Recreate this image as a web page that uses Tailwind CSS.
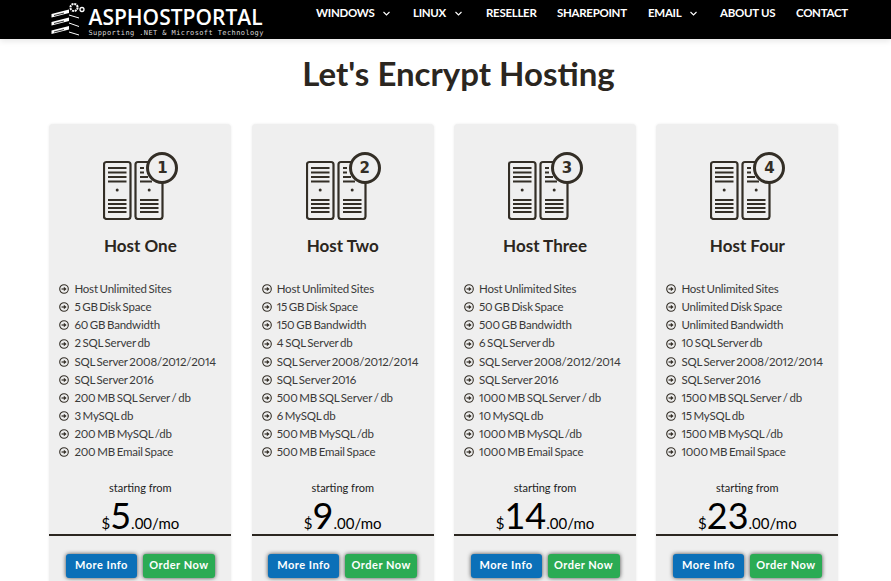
<!DOCTYPE html>
<html lang="en">
  <head>
    <meta charset="UTF-8" />
    <title>Let's Encrypt Hosting | ASPHostPortal</title>
    <script src="https://cdn.jsdelivr.net/npm/@tailwindcss/browser@4"></script>
  </head>
  <body class="bg-white h-[581px] overflow-hidden font-['Lato',sans-serif] text-[#2b2620]">

    <!-- shared icons -->
    <svg class="hidden">
      <symbol id="racks" viewBox="0 0 76 68">
        <g fill="none" stroke="#332e26" stroke-width="2.200">
          <rect x="1" y="10" width="26.500" height="57" rx="2.500" />
          <rect x="32.500" y="10" width="27" height="57" rx="2.500" />
        </g>
        <g stroke="#332e26" stroke-width="1.800">
          <path d="M5 16H23.500M5 20.500H23.500M5 25H23.500M5 29.500H23.500M5 48H23.500M5 52H23.500M5 56H23.500M5 60H23.500" />
          <path d="M37 16H41M37 20.500H41M37 25H45M37 29.500H49M37 48H55.500M37 52H55.500M37 56H55.500M37 60H55.500" />
        </g>
        <circle cx="14.200" cy="38" r="1.500" fill="#332e26" />
        <circle cx="46.200" cy="38" r="1.500" fill="#332e26" />
      </symbol>
      <symbol id="bullet" viewBox="0 0 10 10">
        <circle cx="5" cy="5" r="4.300" fill="none" stroke="#332e26" stroke-width="1.100" />
        <path d="M2.500 5H5" stroke="#332e26" stroke-width="1.200" />
        <path d="M4.800 2.800L7.600 5L4.800 7.200Z" fill="#332e26" />
      </symbol>
    </svg>

    <!-- NAV -->
    <header class="relative z-10 h-[39px] bg-black shadow-[0_2px_6px_rgba(0,0,0,0.1)] flex text-white">
      <a class="ml-[50px] mt-[2px] flex gap-[3px] h-[35px]">
        <svg width="35" height="35" viewBox="0 0 35 35" fill="none" stroke="#fff">
          <path d="M1.500 12L19 7.500V11L1.500 15.500ZM1.500 20L19 15.500V19L1.500 23.500ZM1.500 28.500L19 24V27.500L1.500 32Z" fill="#fff" stroke="none" />
          <path d="M4 13.500L14 11M4 21.500L14 19M4 30L14 27.500" stroke="#000" stroke-width="0.800" />
          <path d="M19 13L29 16M19 21L29 24.500M19 30L29 33" stroke-width="1" />
          <circle cx="24" cy="5.500" r="3.600" stroke-width="2" stroke-dasharray="2 0.800" />
          <circle cx="32" cy="7.500" r="2" stroke-width="1.300" />
        </svg>
      </a>
      <span class="absolute left-[88.500px] top-[5px] flex flex-col">
        <span class="font-['Open_Sans',sans-serif] font-semibold text-[21px] leading-[24px]">ASPHOSTPORTAL</span>
        <span class="font-['DejaVu_Sans_Mono',monospace] text-[7px] leading-[8px] tracking-[0.4px] text-[#d8d8d8]">Supporting .NET &amp; Microsoft Technology</span>
      </span>
      <nav class="absolute left-[316px] top-[6px] flex text-[11.500px] leading-[14px] font-bold tracking-[-0.3px]">
        <a class="w-[97px] flex items-center gap-[9px]">WINDOWS
          <svg width="7" height="5" viewBox="0 0 7 5" fill="none" stroke="#fff" stroke-width="1.100"><path d="M0.500 1L3.500 4L6.500 1" /></svg>
        </a>
        <a class="w-[73px] flex items-center gap-[9px]">LINUX
          <svg width="7" height="5" viewBox="0 0 7 5" fill="none" stroke="#fff" stroke-width="1.100"><path d="M0.500 1L3.500 4L6.500 1" /></svg>
        </a>
        <a class="w-[71px]">RESELLER</a>
        <a class="w-[91px]">SHAREPOINT</a>
        <a class="w-[72px] flex items-center gap-[9px]">EMAIL
          <svg width="7" height="5" viewBox="0 0 7 5" fill="none" stroke="#fff" stroke-width="1.100"><path d="M0.500 1L3.500 4L6.500 1" /></svg>
        </a>
        <a class="w-[76px]">ABOUT US</a>
        <a>CONTACT</a>
      </nav>
    </header>

    <main>
      <h1 class="text-center text-[33px] leading-[40px] font-bold mt-[14px] mb-[31px] pl-[26px] text-[#2b2620]">Let's Encrypt Hosting</h1>

      <section class="ml-[49.400px] w-[789px] grid grid-cols-4 gap-[20.330px]">

        <!-- Host One -->
        <article class="h-[480px] bg-[#efefef] rounded-[4px] shadow-[0_0_3px_rgba(0,0,0,0.08)]">
          <div class="relative ml-[54px] mt-[28px] w-[76px] h-[68px]">
            <svg width="76" height="68"><use href="#racks" /></svg>
            <span class="absolute left-[43px] top-0 w-[32px] h-[32px] rounded-full border-[3px] border-[#332e26] bg-[#efefef] flex items-center justify-center font-['DejaVu_Sans',sans-serif] text-[15px] font-bold text-[#332e26]">1</span>
          </div>
          <h2 class="text-center text-[17px] leading-[20px] font-bold mt-[16px] mb-[24px]">Host One</h2>
          <ul class="pl-[10px] text-[11.500px] leading-[18.150px] tracking-[-0.2px] [word-spacing:-1px] [font-variant-numeric:proportional-nums] text-[#3a3a3a]">
            <li class="flex items-center gap-[5px]"><svg width="10" height="10"><use href="#bullet" /></svg>Host Unlimited Sites</li>
            <li class="flex items-center gap-[5px]"><svg width="10" height="10"><use href="#bullet" /></svg>5 GB Disk Space</li>
            <li class="flex items-center gap-[5px]"><svg width="10" height="10"><use href="#bullet" /></svg>60 GB Bandwidth</li>
            <li class="flex items-center gap-[5px]"><svg width="10" height="10"><use href="#bullet" /></svg>2 SQL Server db</li>
            <li class="flex items-center gap-[5px]"><svg width="10" height="10"><use href="#bullet" /></svg>SQL Server 2008/2012/2014</li>
            <li class="flex items-center gap-[5px]"><svg width="10" height="10"><use href="#bullet" /></svg>SQL Server 2016</li>
            <li class="flex items-center gap-[5px]"><svg width="10" height="10"><use href="#bullet" /></svg>200 MB SQL Server / db</li>
            <li class="flex items-center gap-[5px]"><svg width="10" height="10"><use href="#bullet" /></svg>3 MySQL db</li>
            <li class="flex items-center gap-[5px]"><svg width="10" height="10"><use href="#bullet" /></svg>200 MB MySQL /db</li>
            <li class="flex items-center gap-[5px]"><svg width="10" height="10"><use href="#bullet" /></svg>200 MB Email Space</li>
          </ul>
          <p class="text-center text-[11px] leading-[14px] mt-[19px] text-[#222]">starting from</p>
          <p class="text-center text-[15px] leading-[36px] h-[37px] text-black mt-[2px] border-b-2 border-[#2b2620] box-content">$<span class="text-[36px]">5</span>.00/mo</p>
          <div class="flex justify-center gap-[6px] mt-[18px] text-[11px] font-bold tracking-[0.5px] text-white">
            <a class="w-[71px] h-[24px] flex items-center justify-center rounded-[3px] bg-[#0b70b8] shadow-[0_0_4px_rgba(0,0,0,0.7)]">More Info</a>
            <a class="w-[72px] h-[24px] flex items-center justify-center rounded-[3px] bg-[#2bab54] shadow-[0_0_4px_rgba(0,0,0,0.7)]">Order Now</a>
          </div>
        </article>

        <!-- Host Two -->
        <article class="h-[480px] bg-[#efefef] rounded-[4px] shadow-[0_0_3px_rgba(0,0,0,0.08)]">
          <div class="relative ml-[54px] mt-[28px] w-[76px] h-[68px]">
            <svg width="76" height="68"><use href="#racks" /></svg>
            <span class="absolute left-[43px] top-0 w-[32px] h-[32px] rounded-full border-[3px] border-[#332e26] bg-[#efefef] flex items-center justify-center font-['DejaVu_Sans',sans-serif] text-[15px] font-bold text-[#332e26]">2</span>
          </div>
          <h2 class="text-center text-[17px] leading-[20px] font-bold mt-[16px] mb-[24px]">Host Two</h2>
          <ul class="pl-[10px] text-[11.500px] leading-[18.150px] tracking-[-0.2px] [word-spacing:-1px] [font-variant-numeric:proportional-nums] text-[#3a3a3a]">
            <li class="flex items-center gap-[5px]"><svg width="10" height="10"><use href="#bullet" /></svg>Host Unlimited Sites</li>
            <li class="flex items-center gap-[5px]"><svg width="10" height="10"><use href="#bullet" /></svg>15 GB Disk Space</li>
            <li class="flex items-center gap-[5px]"><svg width="10" height="10"><use href="#bullet" /></svg>150 GB Bandwidth</li>
            <li class="flex items-center gap-[5px]"><svg width="10" height="10"><use href="#bullet" /></svg>4 SQL Server db</li>
            <li class="flex items-center gap-[5px]"><svg width="10" height="10"><use href="#bullet" /></svg>SQL Server 2008/2012/2014</li>
            <li class="flex items-center gap-[5px]"><svg width="10" height="10"><use href="#bullet" /></svg>SQL Server 2016</li>
            <li class="flex items-center gap-[5px]"><svg width="10" height="10"><use href="#bullet" /></svg>500 MB SQL Server / db</li>
            <li class="flex items-center gap-[5px]"><svg width="10" height="10"><use href="#bullet" /></svg>6 MySQL db</li>
            <li class="flex items-center gap-[5px]"><svg width="10" height="10"><use href="#bullet" /></svg>500 MB MySQL /db</li>
            <li class="flex items-center gap-[5px]"><svg width="10" height="10"><use href="#bullet" /></svg>500 MB Email Space</li>
          </ul>
          <p class="text-center text-[11px] leading-[14px] mt-[19px] text-[#222]">starting from</p>
          <p class="text-center text-[15px] leading-[36px] h-[37px] text-black mt-[2px] border-b-2 border-[#2b2620] box-content">$<span class="text-[36px]">9</span>.00/mo</p>
          <div class="flex justify-center gap-[6px] mt-[18px] text-[11px] font-bold tracking-[0.5px] text-white">
            <a class="w-[71px] h-[24px] flex items-center justify-center rounded-[3px] bg-[#0b70b8] shadow-[0_0_4px_rgba(0,0,0,0.7)]">More Info</a>
            <a class="w-[72px] h-[24px] flex items-center justify-center rounded-[3px] bg-[#2bab54] shadow-[0_0_4px_rgba(0,0,0,0.7)]">Order Now</a>
          </div>
        </article>

        <!-- Host Three -->
        <article class="h-[480px] bg-[#efefef] rounded-[4px] shadow-[0_0_3px_rgba(0,0,0,0.08)]">
          <div class="relative ml-[54px] mt-[28px] w-[76px] h-[68px]">
            <svg width="76" height="68"><use href="#racks" /></svg>
            <span class="absolute left-[43px] top-0 w-[32px] h-[32px] rounded-full border-[3px] border-[#332e26] bg-[#efefef] flex items-center justify-center font-['DejaVu_Sans',sans-serif] text-[15px] font-bold text-[#332e26]">3</span>
          </div>
          <h2 class="text-center text-[17px] leading-[20px] font-bold mt-[16px] mb-[24px]">Host Three</h2>
          <ul class="pl-[10px] text-[11.500px] leading-[18.150px] tracking-[-0.2px] [word-spacing:-1px] [font-variant-numeric:proportional-nums] text-[#3a3a3a]">
            <li class="flex items-center gap-[5px]"><svg width="10" height="10"><use href="#bullet" /></svg>Host Unlimited Sites</li>
            <li class="flex items-center gap-[5px]"><svg width="10" height="10"><use href="#bullet" /></svg>50 GB Disk Space</li>
            <li class="flex items-center gap-[5px]"><svg width="10" height="10"><use href="#bullet" /></svg>500 GB Bandwidth</li>
            <li class="flex items-center gap-[5px]"><svg width="10" height="10"><use href="#bullet" /></svg>6 SQL Server db</li>
            <li class="flex items-center gap-[5px]"><svg width="10" height="10"><use href="#bullet" /></svg>SQL Server 2008/2012/2014</li>
            <li class="flex items-center gap-[5px]"><svg width="10" height="10"><use href="#bullet" /></svg>SQL Server 2016</li>
            <li class="flex items-center gap-[5px]"><svg width="10" height="10"><use href="#bullet" /></svg>1000 MB SQL Server / db</li>
            <li class="flex items-center gap-[5px]"><svg width="10" height="10"><use href="#bullet" /></svg>10 MySQL db</li>
            <li class="flex items-center gap-[5px]"><svg width="10" height="10"><use href="#bullet" /></svg>1000 MB MySQL /db</li>
            <li class="flex items-center gap-[5px]"><svg width="10" height="10"><use href="#bullet" /></svg>1000 MB Email Space</li>
          </ul>
          <p class="text-center text-[11px] leading-[14px] mt-[19px] text-[#222]">starting from</p>
          <p class="text-center text-[15px] leading-[36px] h-[37px] text-black mt-[2px] border-b-2 border-[#2b2620] box-content">$<span class="text-[36px]">14</span>.00/mo</p>
          <div class="flex justify-center gap-[6px] mt-[18px] text-[11px] font-bold tracking-[0.5px] text-white">
            <a class="w-[71px] h-[24px] flex items-center justify-center rounded-[3px] bg-[#0b70b8] shadow-[0_0_4px_rgba(0,0,0,0.7)]">More Info</a>
            <a class="w-[72px] h-[24px] flex items-center justify-center rounded-[3px] bg-[#2bab54] shadow-[0_0_4px_rgba(0,0,0,0.7)]">Order Now</a>
          </div>
        </article>

        <!-- Host Four -->
        <article class="h-[480px] bg-[#efefef] rounded-[4px] shadow-[0_0_3px_rgba(0,0,0,0.08)]">
          <div class="relative ml-[54px] mt-[28px] w-[76px] h-[68px]">
            <svg width="76" height="68"><use href="#racks" /></svg>
            <span class="absolute left-[43px] top-0 w-[32px] h-[32px] rounded-full border-[3px] border-[#332e26] bg-[#efefef] flex items-center justify-center font-['DejaVu_Sans',sans-serif] text-[15px] font-bold text-[#332e26]">4</span>
          </div>
          <h2 class="text-center text-[17px] leading-[20px] font-bold mt-[16px] mb-[24px]">Host Four</h2>
          <ul class="pl-[10px] text-[11.500px] leading-[18.150px] tracking-[-0.2px] [word-spacing:-1px] [font-variant-numeric:proportional-nums] text-[#3a3a3a]">
            <li class="flex items-center gap-[5px]"><svg width="10" height="10"><use href="#bullet" /></svg>Host Unlimited Sites</li>
            <li class="flex items-center gap-[5px]"><svg width="10" height="10"><use href="#bullet" /></svg>Unlimited Disk Space</li>
            <li class="flex items-center gap-[5px]"><svg width="10" height="10"><use href="#bullet" /></svg>Unlimited Bandwidth</li>
            <li class="flex items-center gap-[5px]"><svg width="10" height="10"><use href="#bullet" /></svg>10 SQL Server db</li>
            <li class="flex items-center gap-[5px]"><svg width="10" height="10"><use href="#bullet" /></svg>SQL Server 2008/2012/2014</li>
            <li class="flex items-center gap-[5px]"><svg width="10" height="10"><use href="#bullet" /></svg>SQL Server 2016</li>
            <li class="flex items-center gap-[5px]"><svg width="10" height="10"><use href="#bullet" /></svg>1500 MB SQL Server / db</li>
            <li class="flex items-center gap-[5px]"><svg width="10" height="10"><use href="#bullet" /></svg>15 MySQL db</li>
            <li class="flex items-center gap-[5px]"><svg width="10" height="10"><use href="#bullet" /></svg>1500 MB MySQL /db</li>
            <li class="flex items-center gap-[5px]"><svg width="10" height="10"><use href="#bullet" /></svg>1000 MB Email Space</li>
          </ul>
          <p class="text-center text-[11px] leading-[14px] mt-[19px] text-[#222]">starting from</p>
          <p class="text-center text-[15px] leading-[36px] h-[37px] text-black mt-[2px] border-b-2 border-[#2b2620] box-content">$<span class="text-[36px]">23</span>.00/mo</p>
          <div class="flex justify-center gap-[6px] mt-[18px] text-[11px] font-bold tracking-[0.5px] text-white">
            <a class="w-[71px] h-[24px] flex items-center justify-center rounded-[3px] bg-[#0b70b8] shadow-[0_0_4px_rgba(0,0,0,0.7)]">More Info</a>
            <a class="w-[72px] h-[24px] flex items-center justify-center rounded-[3px] bg-[#2bab54] shadow-[0_0_4px_rgba(0,0,0,0.7)]">Order Now</a>
          </div>
        </article>

      </section>
    </main>
  </body>
</html>
